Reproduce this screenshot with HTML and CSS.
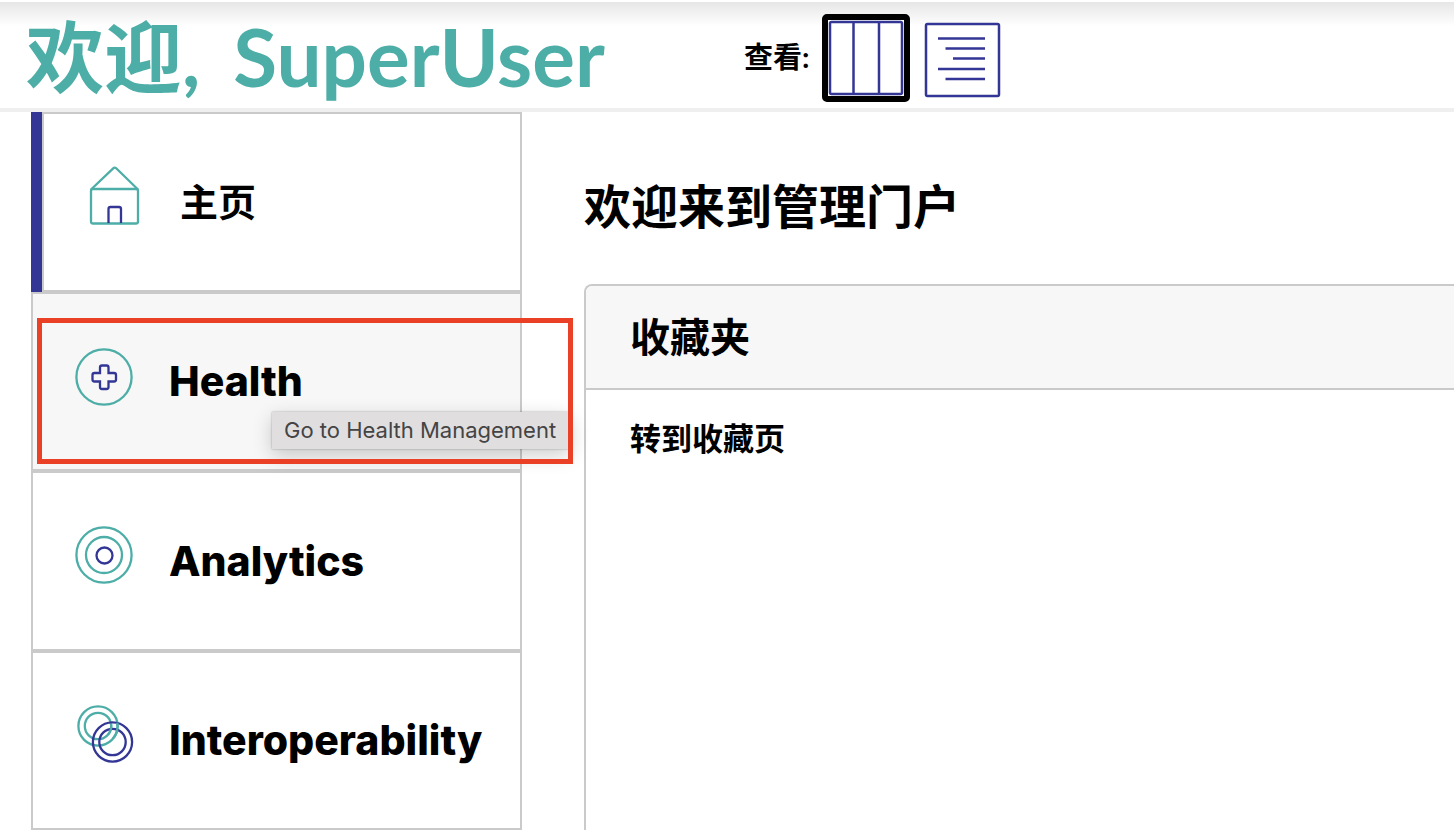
FILE: index.html
```html
<!DOCTYPE html>
<html lang="zh-CN">
<head>
    <meta charset="UTF-8">
    <meta name="viewport" content="width=device-width, initial-scale=1">
    <title>管理门户</title>
    <link rel="stylesheet" href="styles.css">
</head>
<body>

<header class="topbar">
    <h1 class="greeting">欢迎, <span class="user-name">SuperUser</span></h1>
    <div class="view-switch">
        <span class="view-label">查看:</span>
        <div class="view-buttons">
            <button class="view-btn active" type="button" aria-label="Columns">
                <svg viewBox="0 0 76 76" fill="none" stroke="#333695" stroke-width="2.5">
                    <rect x="2" y="2" width="72" height="72" rx="1.5"/>
                    <path d="M25.5 2v72M51 2v72"/>
                </svg>
            </button>
            <button class="view-btn" type="button" aria-label="List">
                <svg viewBox="0 -2 76 76" fill="none" stroke="#333695" stroke-width="2.5">
                    <rect x="2" y="2" width="73" height="72" rx="1.5"/>
                    <path d="M14 16.5h47M21.5 26.5h39.5M29 36.5h32M14 47h47M21.5 57h39.5"/>
                </svg>
            </button>
        </div>
    </div>
</header>

<div class="page">
    <nav class="sidebar">
        <a class="nav-item current" href="#">
            <svg class="nav-icon" viewBox="0 0 58 58" fill="none" stroke="#4dada7" stroke-width="2.3" stroke-linejoin="round">
                <path d="M5 22.5 27.200 1.300Q28.700 0 30.200 1.300L52 22.5"/>
                <rect x="5" y="22" width="47" height="34.5" rx="2"/>
                <path d="M22.5 56V42q0-2 2-2h8.500q2 0 2 2v14" stroke="#333695"/>
            </svg>
            <span class="nav-text zh">主页</span>
        </a>
        <a class="nav-item hovered" href="#">
            <svg class="nav-icon" viewBox="0 -2 58 58" fill="none" stroke="#4dada7" stroke-width="2.3">
                <circle cx="29" cy="29" r="27.600"/>
                <path d="M27 17.5h4.500q2 0 2 2v5.500h5.500q2 0 2 2v4.500q0 2-2 2h-5.500v5.500q0 2-2 2H27q-2 0-2-2v-5.500h-5.500q-2 0-2-2V27q0-2 2-2H25v-5.500q0-2 2-2z" stroke="#333695"/>
            </svg>
            <span class="nav-text">Health</span>
            <span class="tooltip" role="tooltip">Go to Health Management</span>
            <span class="marker"></span>
        </a>
        <a class="nav-item" href="#">
            <svg class="nav-icon" viewBox="0 0 58 58" fill="none" stroke="#4dada7" stroke-width="2.3">
                <circle cx="29" cy="29" r="27.600"/>
                <circle cx="29" cy="29" r="18"/>
                <circle cx="29.5" cy="29.5" r="8" stroke="#333695"/>
            </svg>
            <span class="nav-text">Analytics</span>
        </a>
        <a class="nav-item" href="#">
            <svg class="nav-icon" viewBox="0 0 58 58" fill="none" stroke-width="2.3">
                <g stroke="#4dada7">
                    <circle cx="23" cy="21" r="19.600"/>
                    <circle cx="23" cy="21" r="13.200"/>
                </g>
                <g stroke="#333695">
                    <circle cx="37.5" cy="37" r="19.600"/>
                    <circle cx="37.5" cy="37" r="13.200"/>
                </g>
                <!-- teal ring passes over the blue one on the right side -->
                <path d="M36 18.700a13.200 13.200 0 0 1-2.900 10.800M42.300 17.600a19.600 19.600 0 0 1-4.300 16" stroke="#4dada7"/>
            </svg>
            <span class="nav-text">Interoperability</span>
        </a>
    </nav>

    <main class="content">
        <h2 class="page-title">欢迎来到管理门户</h2>
        <section class="card">
            <h3 class="card-head">收藏夹</h3>
            <div class="card-body">
                <a class="card-link" href="#">转到收藏页</a>
            </div>
        </section>
    </main>
</div>

</body>
</html>
```

FILE: styles.css
```css
* {
  box-sizing: border-box;
}

body {
  margin: 0;
  height: 100vh;
  display: flex;
  flex-direction: column;
  overflow: hidden;
  background: #fff;
  color: #000;
  font-family: Lato, "Noto Sans CJK SC", sans-serif;
}

a {
  color: inherit;
  text-decoration: none;
}

h1, h2, h3 {
  margin: 0;
}

/* top bar */
.topbar {
  display: flex;
  align-items: center;
  height: 112px;
  padding-left: 26px;
  border-top: 2px solid #fff;
  border-bottom: 4px solid #efefef;
  background: linear-gradient(#e6e6e6, #fff 24px);
}

.greeting {
  width: 718px;
  padding-top: 2px;
  color: #4dada7;
  font-size: 78px;
  font-weight: 700;
  line-height: 104px;
  white-space: nowrap;
}

.user-name {
  margin-left: 14px;
  font-size: 80px;
}

.view-switch {
  display: flex;
  align-items: center;
}

.view-label {
  margin-right: 13px;
  font-size: 29px;
  font-weight: 700;
}

.view-buttons {
  display: flex;
  gap: 8px;
  padding-top: 6px;
}

.view-btn {
  width: 88px;
  height: 88px;
  padding: 0;
  border: 6px solid transparent;
  border-radius: 5px;
  background: transparent;
}

.view-btn.active {
  border-color: #000;
  background: #fff;
}

.view-btn svg {
  display: block;
  width: 76px;
  height: 76px;
  overflow: visible;
}

/* sidebar */
.page {
  flex: 1;
  display: flex;
}

.sidebar {
  display: flex;
  flex-direction: column;
  width: 491px;
  margin-left: 31px;
}

.nav-item {
  position: relative;
  flex: 1;
  display: flex;
  align-items: center;
  gap: 36px;
  padding-left: 42px;
  border: 2px solid #cacaca;
}

.nav-item.current {
  margin-left: 11px;
  box-shadow: -11px 0 0 #333695;
}

.nav-item.hovered {
  background: #f7f7f7;
}

.nav-icon {
  width: 58px;
  height: 58px;
  margin-bottom: 12px;
  overflow: visible;
}

.nav-text {
  font-family: Inter, sans-serif;
  font-size: 41px;
  font-weight: 800;
}

.nav-text.zh {
  padding-bottom: 4px;
  font-family: "Noto Sans CJK SC", sans-serif;
  font-size: 38px;
  font-weight: 700;
}

.tooltip {
  position: absolute;
  left: 239px;
  top: 118px;
  width: 298px;
  padding-left: 12px;
  background: #e1dedf;
  box-shadow: 0 0 2px rgba(0, 0, 0, 0.3), 0 6px 20px rgba(0, 0, 0, 0.2);
  color: #444;
  font-family: Inter, sans-serif;
  font-size: 22px;
  line-height: 37px;
  white-space: nowrap;
  z-index: 1;
}

/* red frame round the hovered entry */
.marker {
  position: absolute;
  left: 4px;
  top: 24px;
  width: 536px;
  height: 146px;
  border: 5px solid #ea4025;
  z-index: 2;
}

/* content */
.content {
  flex: 1;
  display: flex;
  flex-direction: column;
  padding: 60px 0 0 62px;
}

.page-title {
  margin-bottom: 44px;
  font-size: 47px;
  font-weight: 700;
  line-height: 68px;
}

.card {
  flex: 1;
  border: 2px solid #cacaca;
  border-width: 2px 0 0 2px;
  border-radius: 8px 0 0 0;
}

.card-head {
  padding: 20px 44px;
  border-bottom: 2px solid #cacaca;
  border-radius: 6px 0 0 0;
  background: #f7f7f7;
  font-size: 40px;
  font-weight: 700;
  line-height: 62px;
}

.card-body {
  padding: 26px 44px;
  font-size: 31px;
  font-weight: 700;
  line-height: 44px;
}
```
